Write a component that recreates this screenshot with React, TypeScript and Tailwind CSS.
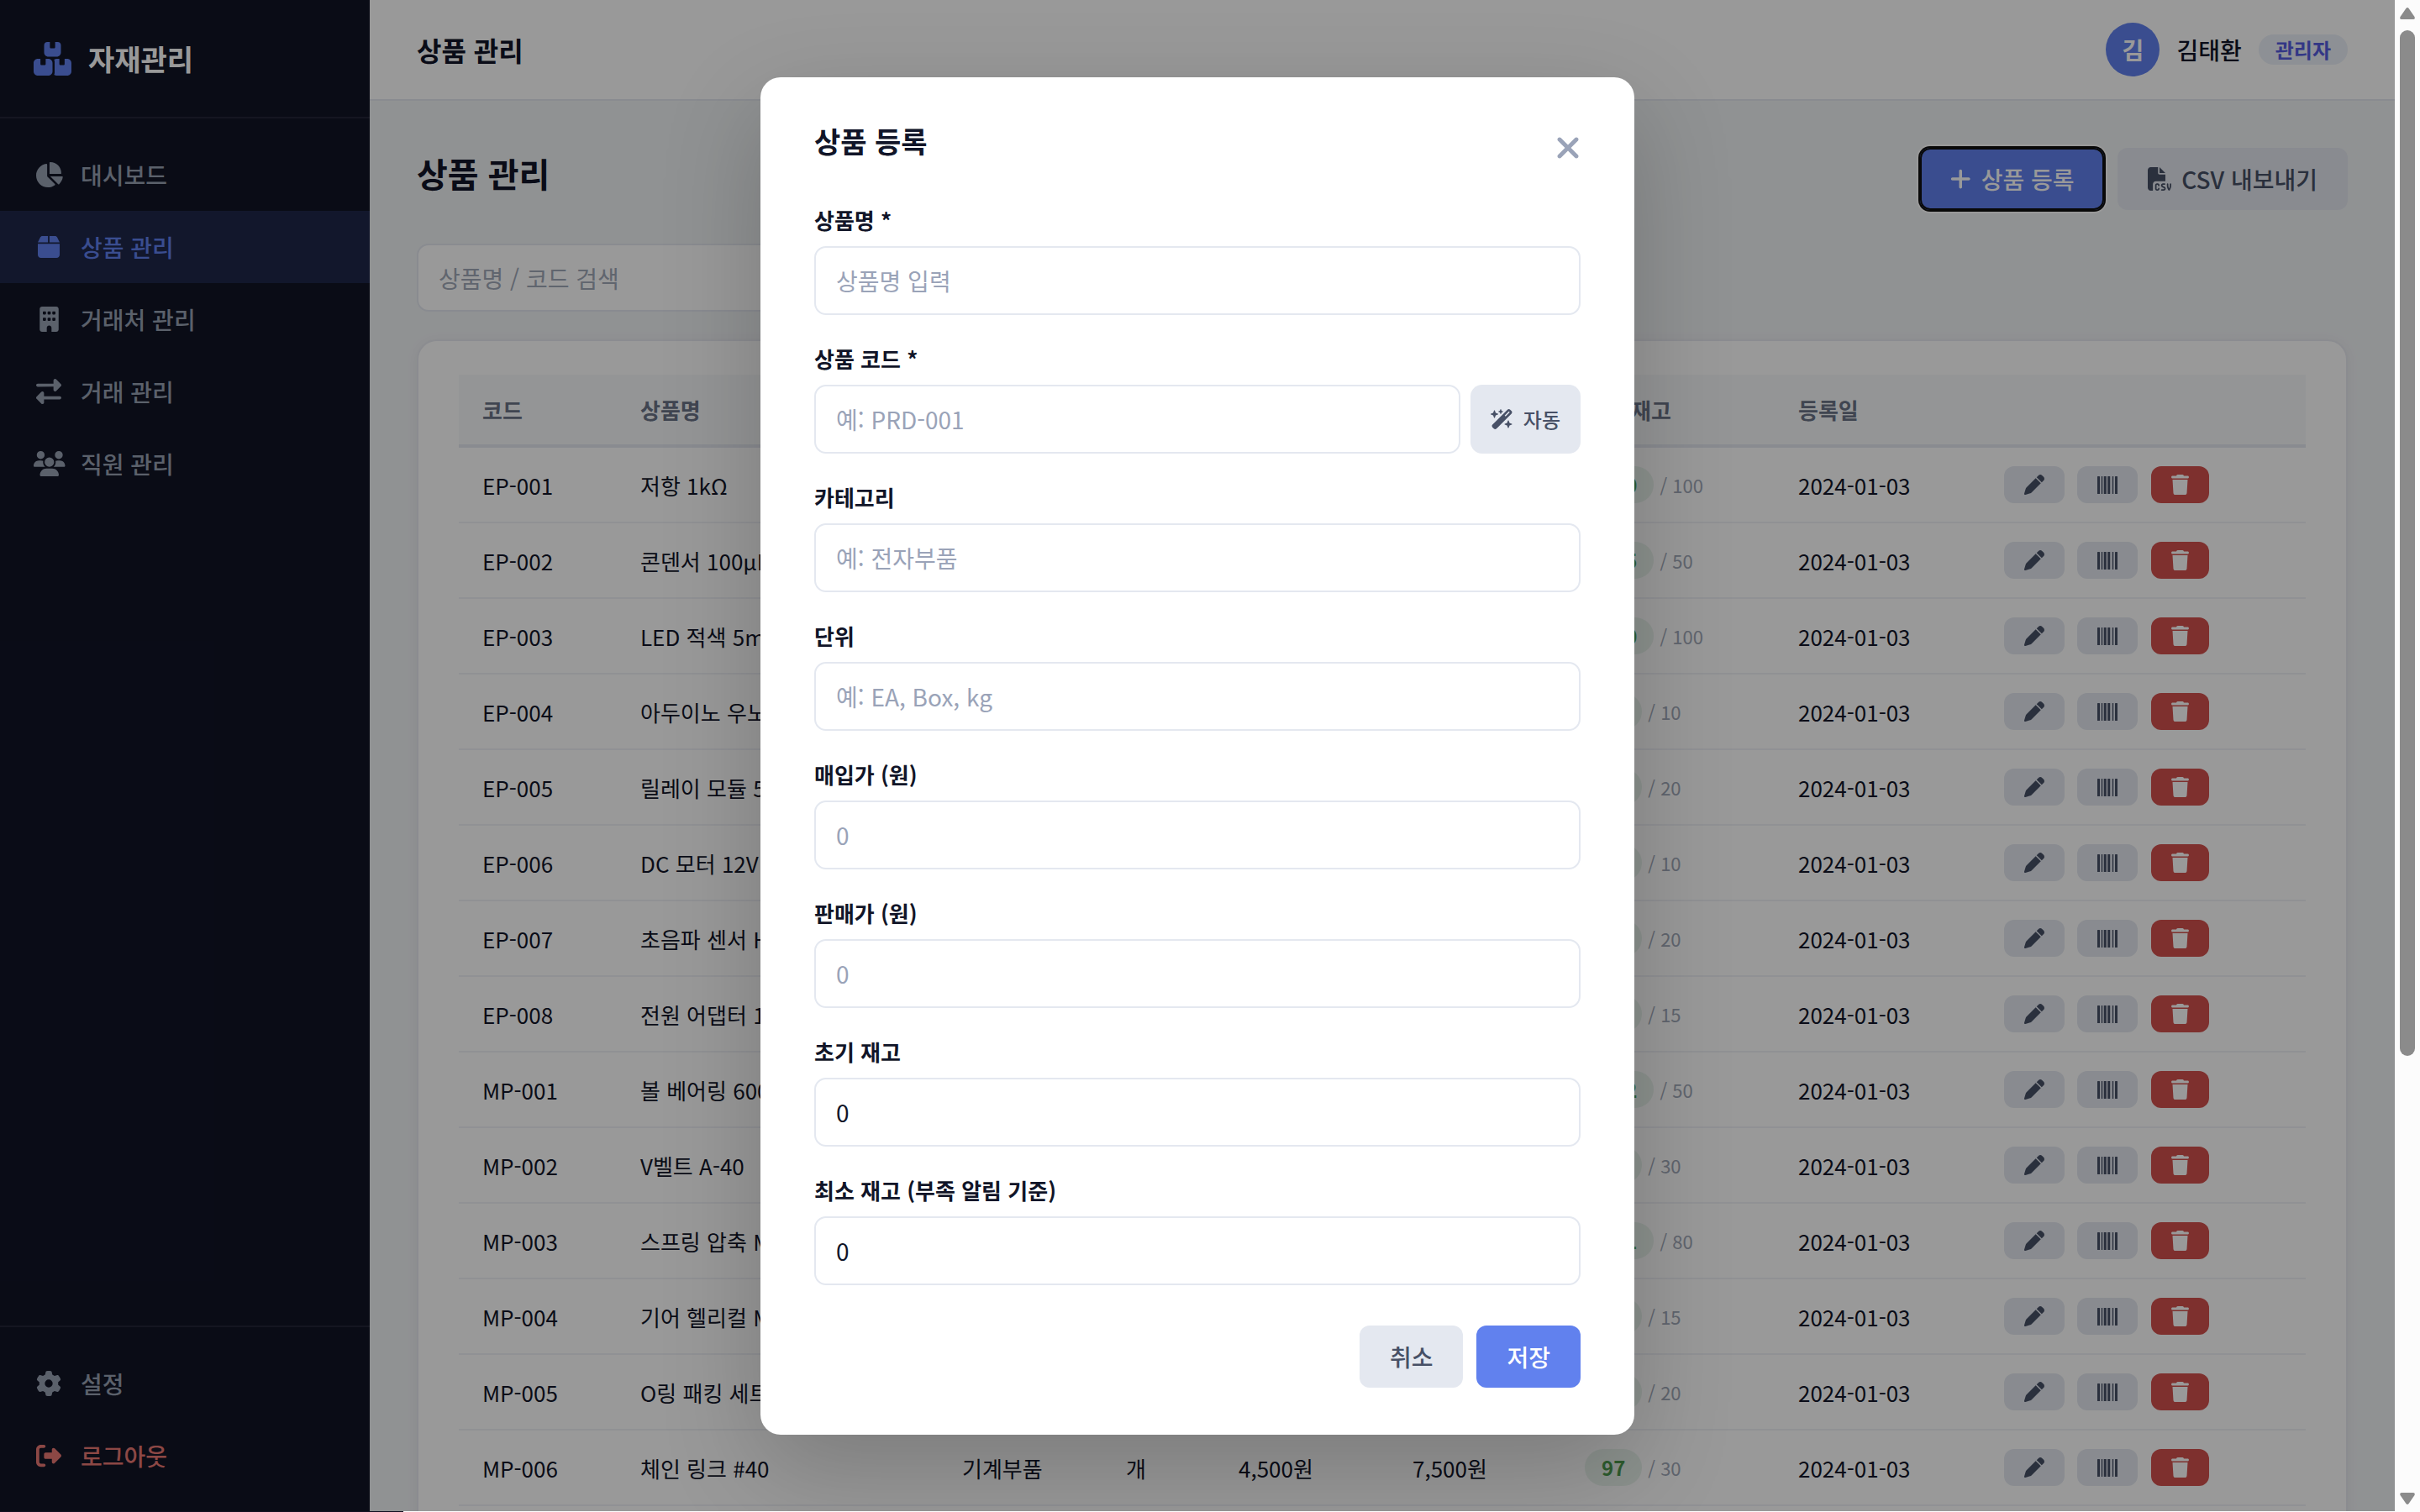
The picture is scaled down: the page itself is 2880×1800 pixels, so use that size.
import React from 'react';
import {
  FaBox,
  FaBoxesStacked,
  FaBuilding,
  FaChartPie,
  FaFileCsv,
  FaGear,
  FaPen,
  FaPlus,
  FaRightFromBracket,
  FaRightLeft,
  FaTrash,
  FaUsers,
  FaWandMagicSparkles,
  FaXmark,
} from 'react-icons/fa6';

const NAV_ITEMS = [
  { label: '대시보드', icon: <FaChartPie className="h-[30px] w-[34px]" /> },
  { label: '상품 관리', icon: <FaBox className="h-[30px] w-[26px]" />, active: true },
  { label: '거래처 관리', icon: <FaBuilding className="h-[30px] w-[23px]" /> },
  { label: '거래 관리', icon: <FaRightLeft className="h-[30px] w-[30px]" /> },
  { label: '직원 관리', icon: <FaUsers className="ml-[1.5px] h-[30px] w-[37.5px] shrink-0" /> },
];

const PRODUCTS = [
  { code: 'EP-001', name: '저항 1kΩ', category: '전자부품', unit: '개', buy: '50원', sell: '100원', stock: 500, min: 100 },
  { code: 'EP-002', name: '콘덴서 100μF', category: '전자부품', unit: '개', buy: '200원', sell: '350원', stock: 195, min: 50 },
  { code: 'EP-003', name: 'LED 적색 5mm', category: '전자부품', unit: '개', buy: '80원', sell: '150원', stock: 300, min: 100 },
  { code: 'EP-004', name: '아두이노 우노', category: '전자부품', unit: '개', buy: '9,000원', sell: '15,000원', stock: 25, min: 10 },
  { code: 'EP-005', name: '릴레이 모듈 5V', category: '전자부품', unit: '개', buy: '1,500원', sell: '3,000원', stock: 60, min: 20 },
  { code: 'EP-006', name: 'DC 모터 12V', category: '전자부품', unit: '개', buy: '4,000원', sell: '7,000원', stock: 30, min: 10 },
  { code: 'EP-007', name: '초음파 센서 HC', category: '전자부품', unit: '개', buy: '2,000원', sell: '3,500원', stock: 45, min: 20 },
  { code: 'EP-008', name: '전원 어댑터 12V', category: '전자부품', unit: '개', buy: '5,000원', sell: '9,000원', stock: 38, min: 15 },
  { code: 'MP-001', name: '볼 베어링 6001', category: '기계부품', unit: '개', buy: '1,200원', sell: '2,500원', stock: 142, min: 50 },
  { code: 'MP-002', name: 'V벨트 A-40', category: '기계부품', unit: '개', buy: '3,000원', sell: '5,500원', stock: 75, min: 30 },
  { code: 'MP-003', name: '스프링 압축 M8', category: '기계부품', unit: '개', buy: '500원', sell: '1,000원', stock: 211, min: 80 },
  { code: 'MP-004', name: '기어 헬리컬 M2', category: '기계부품', unit: '개', buy: '8,000원', sell: '14,000원', stock: 34, min: 15 },
  { code: 'MP-005', name: 'O링 패킹 세트', category: '기계부품', unit: '개', buy: '2,500원', sell: '4,500원', stock: 58, min: 20 },
  { code: 'MP-006', name: '체인 링크 #40', category: '기계부품', unit: '개', buy: '4,500원', sell: '7,500원', stock: 97, min: 30 },
];

const HEADERS = ['코드', '상품명', '카테고리', '단위', '매입가', '판매가', '현재 재고', '등록일', ''];

interface NavItemProps {
  label: string;
  icon: React.ReactNode;
  tone?: string;
}

const NavItem = ({ label, icon, tone = 'text-[#98a2b3]' }: NavItemProps) => (
  <a className={`flex h-[86px] items-center gap-5 px-10 text-[28px] font-medium ${tone}`}>
    <span className="flex w-9 shrink-0 justify-center">{icon}</span>
    <span>{label}</span>
  </a>
);

const Sidebar = () => (
  <aside className="flex h-full w-[440px] shrink-0 flex-col bg-[#111426]">
    <div className="flex h-[141px] items-center gap-5 border-b-2 border-white/8 px-10">
      <FaBoxesStacked className="h-10 w-[45px] text-[#6181ee]" />
      <span className="text-[34px] font-bold text-white">자재관리</span>
    </div>
    <nav className="flex-1 py-6">
      {NAV_ITEMS.map((item) => (
        <NavItem
          key={item.label}
          label={item.label}
          icon={item.icon}
          tone={item.active ? 'bg-[#6181ee]/18 text-[#6181ee]' : 'text-[#98a2b3]'}
        />
      ))}
    </nav>
    <div className="border-t-2 border-white/8 pt-6 pb-[23px]">
      <NavItem label="설정" icon={<FaGear className="h-[30px] w-[30px]" />} />
      <NavItem
        label="로그아웃"
        icon={<FaRightFromBracket className="h-[30px] w-[30px]" />}
        tone="text-[#ea7874]"
      />
    </div>
  </aside>
);

const Topbar = () => (
  <header className="flex h-[120px] shrink-0 items-center justify-between border-b-2 border-[#e4e8f0] bg-white px-14">
    <h1 className="text-[32px] font-semibold">상품 관리</h1>
    <div className="flex items-center gap-5">
      <div className="flex size-16 items-center justify-center rounded-full bg-[#6181ee] text-[28px] font-bold text-white">
        김
      </div>
      <span className="text-[28px] font-medium">김태환</span>
      <span className="flex h-9 items-center rounded-full bg-[#ebf0f8] px-5 text-2xl font-semibold text-[#565cdf]">
        관리자
      </span>
    </div>
  </header>
);

const BarcodeIcon = () => (
  <svg viewBox="0 0 24 21" className="h-[21px] w-6" fill="currentColor">
    <rect x="0" width="3" height="21" rx="0.5" />
    <rect x="4.75" width="1.5" height="21" rx="0.5" />
    <rect x="7.75" width="3" height="21" rx="0.5" />
    <rect x="12.25" width="3" height="21" rx="0.5" />
    <rect x="17.75" width="1.5" height="21" rx="0.5" />
    <rect x="21" width="3" height="21" rx="0.5" />
  </svg>
);

const ProductTable = () => (
  <table className="w-full table-fixed border-separate border-spacing-0 text-left text-[26px]">
    <colgroup>
      <col className="w-[188px]" />
      <col className="w-[383px]" />
      <col className="w-[195px]" />
      <col className="w-[134px]" />
      <col className="w-[207px]" />
      <col className="w-[205px]" />
      <col className="w-[254px]" />
      <col className="w-[245px]" />
      <col />
    </colgroup>
    <thead>
      <tr>
        {HEADERS.map((h, i) => (
          <th
            key={i}
            className="h-[87px] border-b-4 border-[#e4e8f0] bg-[#f7f9fb] px-7 py-0 font-semibold whitespace-nowrap text-[#6b7487]"
          >
            {h}
          </th>
        ))}
      </tr>
    </thead>
    <tbody className="whitespace-nowrap [&_td]:h-[90px] [&_td]:border-b-2 [&_td]:border-[#f0f2f7] [&_td]:px-7 [&_td]:py-0">
      {PRODUCTS.map((p) => (
        <tr key={p.code}>
          <td>{p.code}</td>
          <td>{p.name}</td>
          <td>{p.category}</td>
          <td>{p.unit}</td>
          <td>{p.buy}</td>
          <td>{p.sell}</td>
          <td>
            <div className="flex items-center gap-[7px]">
              <span className="flex h-11 items-center rounded-full bg-[#e9f4ed] px-5 text-2xl font-semibold text-[#4c9a4e]">
                {p.stock}
              </span>
              <span className="text-[22px] text-[#a0a8b8]">/ {p.min}</span>
            </div>
          </td>
          <td>2024-01-03</td>
          <td>
            <div className="flex items-center gap-[15px] text-[#475066]">
              <button className="flex h-11 w-[72px] items-center justify-center rounded-xl bg-[#e4e8f0]">
                <FaPen className="size-6" />
              </button>
              <button className="flex h-11 w-[72px] items-center justify-center rounded-xl bg-[#e4e8f0]">
                <BarcodeIcon />
              </button>
              <button className="ml-px flex h-11 w-[69px] items-center justify-center rounded-xl bg-[#d3504d] text-white">
                <FaTrash className="h-6 w-[21px]" />
              </button>
            </div>
          </td>
        </tr>
      ))}
    </tbody>
  </table>
);

interface FieldProps {
  label: string;
  placeholder?: string;
  value?: string;
  children?: React.ReactNode;
}

const Field = ({ label, placeholder, value, children }: FieldProps) => (
  <div className="mb-8">
    <label className="mb-3 flex h-[39px] items-center text-[26px] font-semibold">{label}</label>
    <div className="flex gap-3">
      <input
        className="h-[82px] min-w-0 flex-1 rounded-[14px] border-2 border-[#e4e8f0] bg-white px-6 text-[28px] placeholder:text-[#9aa3b8]"
        placeholder={placeholder}
        defaultValue={value}
      />
      {children}
    </div>
  </div>
);

const ProductModal = () => (
  <div className="h-[1616px] w-[1040px] rounded-3xl bg-white px-16 py-14 shadow-[0_40px_120px_rgba(0,0,0,0.2)]">
    <div className="flex h-[94px] items-start justify-between">
      <h3 className="flex h-[38px] items-center text-[34px] font-bold">상품 등록</h3>
      <button className="flex h-14 items-center text-[#9aa3b8]">
        <FaXmark className="h-10 w-[30px]" />
      </button>
    </div>
    <Field label="상품명 *" placeholder="상품명 입력" />
    <Field label="상품 코드 *" placeholder="예: PRD-001">
      <button className="flex h-[82px] items-center gap-3 rounded-[14px] bg-[#e4e8f0] px-6 text-2xl font-medium text-[#475066]">
        <FaWandMagicSparkles className="h-6 w-[27px]" />
        자동
      </button>
    </Field>
    <Field label="카테고리" placeholder="예: 전자부품" />
    <Field label="단위" placeholder="예: EA, Box, kg" />
    <Field label="매입가 (원)" placeholder="0" />
    <Field label="판매가 (원)" placeholder="0" />
    <Field label="초기 재고" value="0" />
    <Field label="최소 재고 (부족 알림 기준)" value="0" />
    <div className="flex justify-end gap-4 pt-4">
      <button className="h-[74px] rounded-xl bg-[#e4e8f0] px-9 text-[28px] font-medium text-[#475066]">취소</button>
      <button className="h-[74px] rounded-xl bg-[#6181ee] px-9 text-[28px] font-medium text-white">저장</button>
    </div>
  </div>
);

const Scrollbar = () => (
  <div className="flex h-[1800px] w-[30px] shrink-0 flex-col items-center bg-[#fcfcfc] pt-[9px] pb-[9px] text-[#8b8b8b]">
    <svg viewBox="0 0 18 14" className="h-[14px] w-[18px]" fill="currentColor">
      <path d="M7.4 1Q9-.8 10.600 1L17.500 11Q18.500 14 16 14H2Q-.5 14 .5 11Z" />
    </svg>
    <div className="mt-[13px] h-[1221px] w-[18px] rounded-full bg-[#8b8b8b]" />
    <svg viewBox="0 0 18 14" className="mt-auto h-[14px] w-[18px]" fill="currentColor">
      <path d="M7.4 13Q9 14.800 10.600 13L17.500 3Q18.500 0 16 0H2Q-.5 0 .5 3Z" />
    </svg>
  </div>
);

export default function App() {
  return (
    <div
      lang="ko"
      className="flex h-[1800px] w-[2880px] overflow-hidden bg-[#fcfcfc] font-['Noto_Sans_CJK_KR','Noto_Sans',sans-serif] text-[#111528]"
    >
      <div className="relative w-[2850px] shrink-0">
        <div className="flex h-[1799px] overflow-hidden">
          <Sidebar />
          <div className="flex min-w-0 flex-1 flex-col bg-[#f1f3f6]">
            <Topbar />
            <main className="px-14 pt-14">
              <div className="flex h-[74px] items-center justify-between">
                <h2 className="pb-[14px] text-[40px] font-bold">상품 관리</h2>
                <div className="flex gap-4 text-[28px] font-medium">
                  <button className="flex h-[74px] w-[219px] items-center gap-3 rounded-xl bg-[#6181ee] pl-9 whitespace-nowrap text-white shadow-[inset_0_0_0_2px_#101010,0_0_0_2px_#101010,0_0_0_4px_#ffffff]">
                    <FaPlus className="h-7 w-[24.5px] shrink-0" />
                    상품 등록
                  </button>
                  <button className="flex h-[74px] items-center gap-3 rounded-xl bg-[#e4e8f0] px-9 text-[#475066]">
                    <FaFileCsv className="size-7" />
                    CSV 내보내기
                  </button>
                </div>
              </div>
              <input
                className="mt-10 block h-[81px] w-[560px] rounded-[14px] border-2 border-[#e4e8f0] bg-white px-6 text-[28px] placeholder:text-[#a0a8b8]"
                placeholder="상품명 / 코드 검색"
              />
              <section className="mt-[33px] rounded-3xl border-2 border-[#e8eaf0] bg-white px-12 pt-10 pb-10 shadow-[0_2px_16px_rgba(0,0,0,0.05)]">
                <ProductTable />
              </section>
            </main>
          </div>
        </div>
        <div className="h-px w-[480px] bg-[#110f1f]" />
        <div className="absolute inset-x-0 top-0 flex h-[1799px] justify-center overflow-hidden bg-black/40 pt-[92px]">
          <ProductModal />
        </div>
      </div>
      <Scrollbar />
    </div>
  );
}
